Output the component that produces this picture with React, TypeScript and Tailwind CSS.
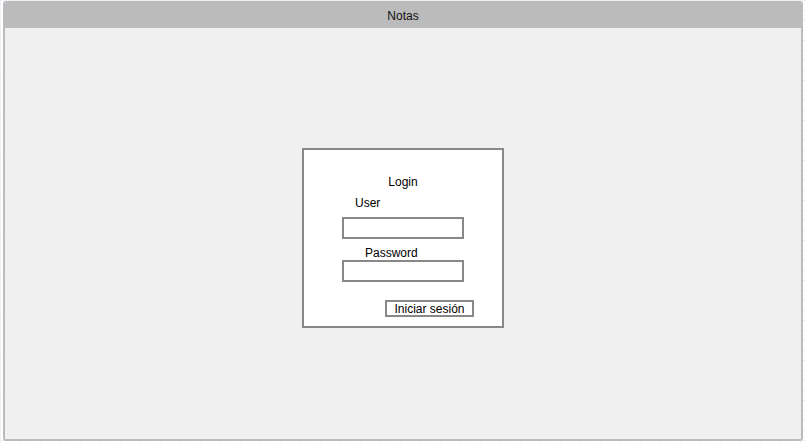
import React from 'react';

const font = { fontFamily: '"Liberation Sans", Arial, sans-serif' };

const App: React.FC = () => {
  return (
    <div
      className="w-[806px] h-[443px] bg-white bg-[linear-gradient(to_right,#f0f0f8_1px,transparent_1px),linear-gradient(to_bottom,#f0f0f8_1px,transparent_1px)] bg-size-[10px_10px] pl-[3px] pt-[1px] pr-[3px] pb-[2px] text-[12px] text-black"
      style={font}
    >
      <div className="w-full h-full flex flex-col border-2 border-[#bbbbbb] rounded-[3px] overflow-hidden">
        <div className="h-[25px] bg-[#bbbbbb] flex items-center justify-center leading-[14px] text-[12px] text-[#111]">
          Notas
        </div>
        <div className="flex-1 bg-[#f0f0f0] flex flex-col items-center pt-[120px]">
          <div className="w-[202px] h-[180px] border-2 border-[#888888] bg-white flex flex-col">
            <div className="mt-[25px] leading-[14px] text-center">Login</div>
            <div className="mt-[7px] ml-[51px] leading-[14px]">User</div>
            <input
              type="text"
              className="mt-[7px] ml-[38px] w-[122px] h-[22px] border-2 border-[#888888] bg-white outline-none"
            />
            <div className="mt-[7px] ml-[61px] leading-[14px]">Password</div>
            <input
              type="password"
              className="mt-0 ml-[38px] w-[122px] h-[22px] border-2 border-[#888888] bg-white outline-none"
            />
            <button className="mt-[18px] ml-[81px] w-[89px] h-[17px] border-2 border-[#888888] bg-white flex items-center justify-center leading-[14px] text-[12px]">
              Iniciar sesión
            </button>
          </div>
        </div>
      </div>
    </div>
  );
};

export default App;
